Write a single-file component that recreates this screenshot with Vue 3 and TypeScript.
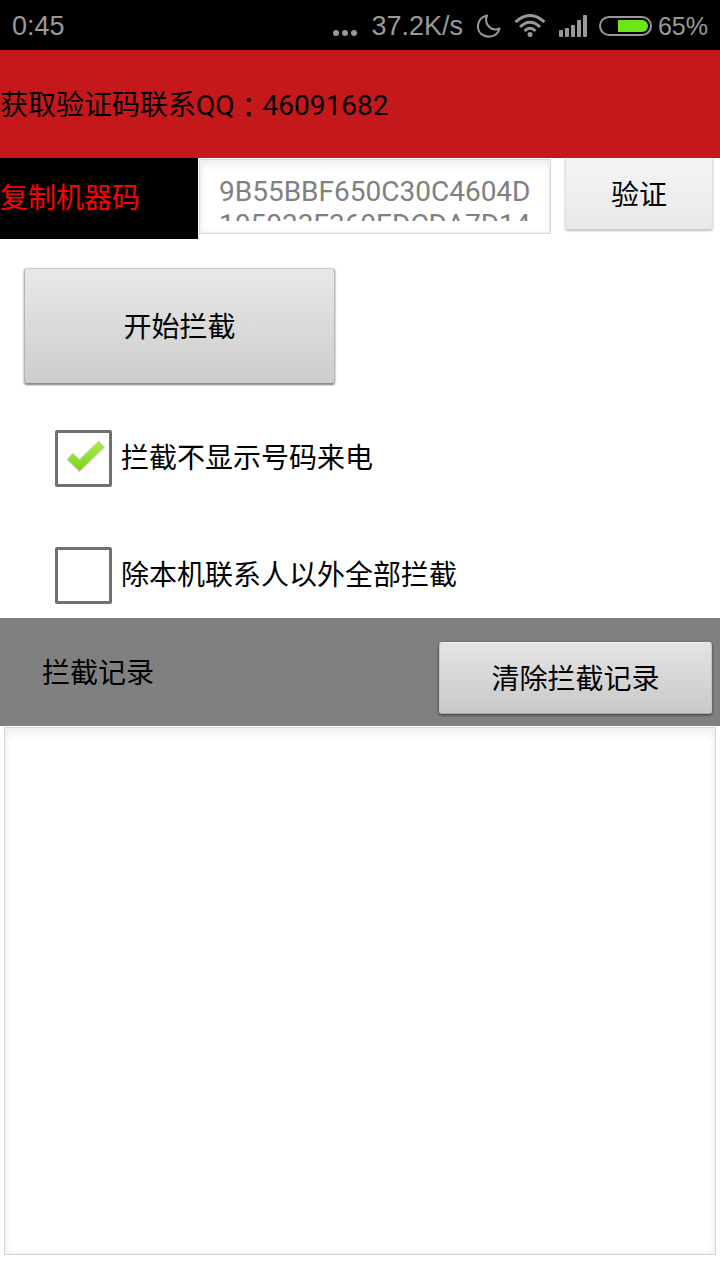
<script setup lang="ts">
import { ref } from 'vue'

const machineCode = ref('9B55BBF650C30C4604D105033F360EDCDA7D14')
const blockHidden = ref(true)
const blockStrangers = ref(false)
const records = ref('')
</script>

<template>
  <div class="screen">
    <header class="status">
      <span class="clock">0:45</span>
      <svg class="dots" width="26" height="26" viewBox="0 0 26 26" aria-hidden="true">
        <circle cx="4" cy="20" r="3" /><circle cx="13" cy="20" r="3" /><circle cx="22" cy="20" r="3" />
      </svg>
      <span class="speed">37.2K/s</span>
      <svg class="moon" width="24" height="24" viewBox="0 0 24 24" aria-hidden="true">
        <path d="M10 1.500C-1 4-2 18 7 21.500C14 24.500 21 21 22.500 14.500C14 18 6.500 10 10 1.500Z" />
      </svg>
      <svg class="wifi" width="32" height="24" viewBox="0 0 32 24" aria-hidden="true">
        <path d="M1.500 8Q16-5 30.500 8M6 13Q16 3.500 26 13M10.500 17Q16 11.500 21.500 17" />
        <circle cx="16" cy="20.500" r="2.500" />
      </svg>
      <svg class="signal" width="28" height="22" viewBox="0 0 28 22" aria-hidden="true">
        <rect x="0" y="15" width="4" height="7" rx="1" /><rect x="6" y="13" width="4" height="9" rx="1" />
        <rect x="12" y="10" width="4" height="12" rx="1" /><rect x="18" y="5" width="4" height="17" rx="1" />
        <rect x="24" y="0" width="4" height="22" rx="1" />
      </svg>
      <svg class="battery" width="54" height="20" viewBox="0 0 54 20" aria-hidden="true">
        <rect class="case" x="1" y="1" width="51" height="18" rx="9" />
        <path class="charge" d="M19 4H43A6 6 0 0 1 43 16H19Z" />
      </svg>
      <span class="percent">65%</span>
    </header>

    <h1 class="banner">获取验证码联系QQ<span class="colon">：</span>46091682</h1>

    <form class="verify" @submit.prevent>
      <label class="copy" for="machine">复制机器码</label>
      <div class="field code-field">
        <textarea id="machine" v-model="machineCode" class="code" spellcheck="false"></textarea>
      </div>
      <button class="btn light" type="submit">验证</button>
    </form>

    <main class="options">
      <button class="btn start" type="button">开始拦截</button>
      <label class="option">
        <span class="tick">
          <input v-model="blockHidden" type="checkbox" />
          <svg v-if="blockHidden" class="mark" viewBox="0 0 56 56" aria-hidden="true">
            <defs>
              <linearGradient id="leaf" x1="0" y1="0" x2="0" y2="1">
                <stop offset="0" stop-color="#a5ee4e" /><stop offset="1" stop-color="#7bd20f" />
              </linearGradient>
            </defs>
            <path d="M12 29L17.500 23L24 29L43 11L48.500 17L24 41Z" />
          </svg>
        </span>
        拦截不显示号码来电
      </label>
      <label class="option">
        <span class="tick">
          <input v-model="blockStrangers" type="checkbox" />
          <svg v-if="blockStrangers" class="mark" viewBox="0 0 56 56" aria-hidden="true">
            <defs>
              <linearGradient id="leaf-strangers" x1="0" y1="0" x2="0" y2="1">
                <stop offset="0" stop-color="#a5ee4e" /><stop offset="1" stop-color="#7bd20f" />
              </linearGradient>
            </defs>
            <path class="strangers" d="M12 29L17.500 23L24 29L43 11L48.500 17L24 41Z" />
          </svg>
        </span>
        除本机联系人以外全部拦截
      </label>
    </main>

    <section class="toolbar">
      <label class="heading" for="records">拦截记录</label>
      <button class="btn clear" type="button">清除拦截记录</button>
    </section>
    <div class="log">
      <textarea id="records" v-model="records" class="field records"></textarea>
    </div>
  </div>
</template>

<style>
body {
  background: #fff;
}
</style>

<style scoped>
.screen,
.screen * {
  box-sizing: border-box;
}
.screen {
  display: flex;
  flex-direction: column;
  min-height: 100vh;
  background: #fff;
  color: #000;
  font-family: Roboto, "Noto Sans CJK SC", sans-serif;
  font-size: 28px;
  line-height: 36px;
}
.status {
  display: flex;
  align-items: center;
  height: 50px;
  padding: 2px 12px 0;
  background: #000;
  color: #999;
  font-family: "Liberation Sans", sans-serif;
  font-size: 27px;
}
.status svg {
  flex: none;
  fill: #999;
}
.clock {
  margin-right: auto;
}
.speed {
  margin: 0 14px 0 13px;
}
.percent {
  font-size: 25px;
}
.status .moon,
.status .wifi {
  fill: none;
  stroke: #999;
  stroke-width: 2;
  stroke-linejoin: round;
}
.status .wifi {
  margin: 0 13px;
  stroke-width: 3;
}
.wifi circle {
  fill: #999;
  stroke: none;
}
.battery {
  margin: 0 5px 0 12px;
}
.battery .case {
  fill: none;
  stroke: #999;
  stroke-width: 2;
}
.battery .charge {
  fill: #6be616;
}
.banner {
  display: flex;
  align-items: center;
  height: 108px;
  margin: 0;
  padding-top: 4px;
  background: #c4181b;
  font-size: 28px;
  font-weight: 400;
}
.colon {
  font-family: "Noto Sans CJK TC", sans-serif;
}
.verify {
  display: flex;
  align-items: flex-start;
  height: 81px;
}
.copy {
  display: flex;
  align-items: center;
  align-self: stretch;
  width: 198px;
  background: #000;
  color: #f00;
}
.field {
  border: 1px solid #d8d8d8;
  background: #fff;
  box-shadow: inset 0 0 0 1px #f0f0f0, inset 0 6px 12px -4px #e8e8e8, inset 0 0 10px #f4f4f4;
}
.code-field {
  flex: 1;
  height: 75px;
  margin: 1px 14px 0 1px;
  padding: 15px 16px 12px 19px;
}
.code {
  display: block;
  width: 100%;
  height: 100%;
  padding: 0;
  border: 0;
  outline: 0;
  overflow: hidden;
  resize: none;
  background: transparent;
  color: #808080;
  font: inherit;
  line-height: 33px;
  word-break: break-all;
}
.btn {
  border: 1px solid #b4b4b4;
  border-color: #c8c8c8 #b4b4b4 #8c8c8c;
  border-radius: 3px;
  padding: 3px 0 0;
  background: linear-gradient(#e8e8e8, #cdcdcd);
  box-shadow: 0 1px 2px #777;
  color: #000;
  font: inherit;
}
.light {
  width: 148px;
  height: 72px;
  margin-right: 7px;
  border-color: #f4f4f4 #dedede #d0d0d0;
  border-radius: 0 0 3px 3px;
  background: linear-gradient(#f4f4f4, #e9e9e9);
  box-shadow: 0 1px 2px #bbb;
}
.options {
  display: flex;
  flex-direction: column;
  align-items: flex-start;
  padding: 29px 24px 14px;
}
.start {
  width: 311px;
  height: 116px;
  margin-bottom: 46px;
}
.option {
  display: flex;
  align-items: center;
  gap: 9px;
  margin-left: 31px;
}
.option + .option {
  margin-top: 60px;
}
.tick {
  display: grid;
  width: 57px;
  height: 57px;
}
.tick > * {
  grid-area: 1 / 1;
  width: 100%;
  height: 100%;
}
.tick input {
  appearance: none;
  margin: 0;
  border: 3px solid #707070;
  border-radius: 2px;
  background: #fff;
}
.mark {
  pointer-events: none;
}
.mark path {
  fill: url(#leaf);
  stroke: #c8d4bc;
  stroke-width: 1;
  stroke-linejoin: round;
}
.mark .strangers {
  fill: url(#leaf-strangers);
}
.toolbar {
  display: flex;
  align-items: flex-start;
  justify-content: space-between;
  height: 108px;
  padding: 24px 8px 0 42px;
  background: #808080;
}
.heading {
  padding-top: 14px;
}
.clear {
  width: 273px;
  height: 72px;
  border-color: #eee #c4c4c4 #aaa;
  background: linear-gradient(#e4e4e4, #c9c9c9);
  box-shadow: 0 1px 3px #333;
}
.log {
  display: flex;
  flex: 1;
  padding: 1px 4px 25px;
}
.records {
  flex: 1;
  padding: 16px;
  outline: 0;
  resize: none;
  font: inherit;
}
</style>
